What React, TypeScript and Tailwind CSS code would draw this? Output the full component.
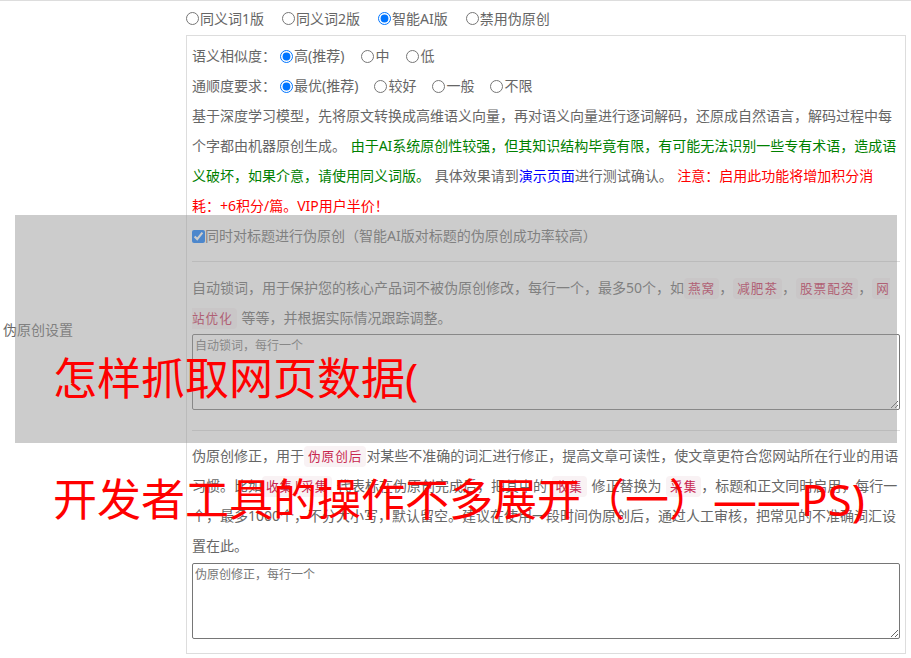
import React from "react";

type Option = { label: string; checked?: boolean };

function RadioGroup({
  name,
  options,
  gap,
}: {
  name: string;
  options: Option[];
  gap: string;
}) {
  return (
    <>
      {options.map((o) => (
        <label key={o.label} className={`inline-flex items-center ${gap}`}>
          <input
            type="radio"
            name={name}
            defaultChecked={o.checked}
            className="m-0 mr-px h-[13px] w-[13px]"
          />
          <span>{o.label}</span>
        </label>
      ))}
    </>
  );
}

function Tag({ children }: { children: React.ReactNode }) {
  return (
    <code className="px-[4px] py-[2px] text-[12.6px] leading-none tracking-[1px] text-[#c7254e] bg-[#f9f2f4] rounded-[4px] font-['Noto_Sans','Noto_Sans_CJK_SC',sans-serif]">
      {children}
    </code>
  );
}

function Divider({ className }: { className: string }) {
  return <div className={`border-t border-[#ddd] ${className}`} />;
}

export default function App() {
  return (
    <div className="relative w-[911px] h-[658px] overflow-hidden bg-white text-[14px] text-[#666] [word-spacing:1px] font-['Noto_Sans','Noto_Sans_CJK_SC',sans-serif]">
      <div className="flex border-t border-[#ddd]">
        <div className="w-[186px] shrink-0 flex items-center pl-[3px]">
          伪原创设置
        </div>

        <div className="flex-1 pb-[3px]">
          <div className="h-[34px] flex items-center">
            <RadioGroup
              name="mode"
              gap="mr-[18px]"
              options={[
                { label: "同义词1版" },
                { label: "同义词2版" },
                { label: "智能AI版", checked: true },
                { label: "禁用伪原创" },
              ]}
            />
          </div>

          <div className="w-[720px] border border-[#ddd] px-[5px] pt-[5px] pb-[14px] leading-[30px]">
            <div className="flex items-center">
              <span className="mr-[4px]">语义相似度：</span>
              <RadioGroup
                name="similar"
                gap="mr-[17px]"
                options={[
                  { label: "高(推荐)", checked: true },
                  { label: "中" },
                  { label: "低" },
                ]}
              />
            </div>
            <div className="flex items-center">
              <span className="mr-[4px]">通顺度要求：</span>
              <RadioGroup
                name="fluent"
                gap="mr-[16px]"
                options={[
                  { label: "最优(推荐)", checked: true },
                  { label: "较好" },
                  { label: "一般" },
                  { label: "不限" },
                ]}
              />
            </div>

            <p>
              基于深度学习模型，先将原文转换成高维语义向量，再对语义向量进行逐词解码，还原成自然语言，解码过程中每个字都由机器原创生成。{" "}
              <span className="text-[#008000]">
                由于AI系统原创性较强，但其知识结构毕竟有限，有可能无法识别一些专有术语，造成语义破坏，如果介意，请使用同义词版。
              </span>{" "}
              具体效果请到<a className="text-[#0000ff]">演示页面</a>进行测试确认。{" "}
              <span className="text-[#ff0000]">
                注意：启用此功能将增加积分消耗：+6积分/篇。VIP用户半价！
              </span>
            </p>

            <label className="flex items-center">
              <input
                type="checkbox"
                defaultChecked
                className="m-0 h-[13px] w-[13px]"
              />
              <span>同时对标题进行伪原创（智能AI版对标题的伪原创成功率较高）</span>
            </label>

            <Divider className="mt-[10px] mb-[11px]" />

            <p>
              自动锁词，用于保护您的核心产品词不被伪原创修改，每行一个，最多50个，如<Tag>燕窝</Tag>，<Tag>减肥茶</Tag>，<Tag>股票配资</Tag>，<Tag>网站优化</Tag> 等等，并根据实际情况跟踪调整。
            </p>
            <textarea
              placeholder="自动锁词，每行一个"
              className="block mt-px w-full h-[76px] p-[2px] text-[12px] leading-normal border border-[#767676] rounded-[2px] placeholder:text-[#757575]"
            />

            <Divider className="mt-[20px] mb-[10px]" />

            <p>
              伪原创修正，用于<Tag>伪原创后</Tag>对某些不准确的词汇进行修正，提高文章可读性，使文章更符合您网站所在行业的用语习惯。比如<Tag>收集|采集</Tag> 代表标在伪原创完成后，把其中的 <Tag>收集</Tag> 修正替换为 <Tag>采集</Tag>，标题和正文同时启用，每行一个，最多1000个，不分大小写，默认留空。建议在使用一段时间伪原创后，通过人工审核，把常见的不准确词汇设置在此。
            </p>
            <textarea
              placeholder="伪原创修正，每行一个"
              className="block mt-[2px] w-full h-[76px] p-[2px] text-[12px] leading-normal border border-[#767676] rounded-[2px] placeholder:text-[#757575]"
            />
          </div>
        </div>
      </div>

      {/* watermark overlay */}
      <div className="absolute left-[15px] top-[215px] w-[882px] h-[228px] bg-[#999]/50" />
      <div className="absolute left-[53px] top-[356px] text-[44px] leading-none text-[#ff0000] whitespace-nowrap [word-spacing:0]">
        怎样抓取网页数据(
      </div>
      <div className="absolute left-[53px] top-[477px] text-[44px] leading-none text-[#ff0000] whitespace-nowrap [word-spacing:0]">
        开发者工具的操作不多展开（一）——PS)
      </div>
    </div>
  );
}
